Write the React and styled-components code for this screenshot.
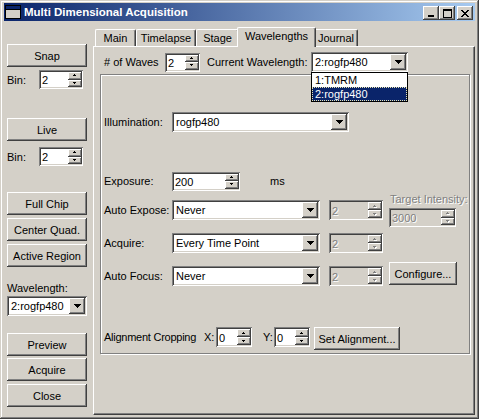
import React from 'react';
import styled, { createGlobalStyle, css } from 'styled-components';

const FONT = `"Liberation Sans", Arial, sans-serif`;

const Global = createGlobalStyle`
  html, body { margin: 0; padding: 0; background: #D4D0C8; }
  body { font-family: ${FONT}; font-size: 11px; color: #000; }
  * { box-sizing: border-box; }
`;

const raised = css`
  background: #D4D0C8;
  box-shadow: inset -1px -1px #404040, inset 1px 1px #fff, inset -2px -2px #808080, inset 2px 2px #D4D0C8;
`;
const sunken = css`
  box-shadow: inset 1px 1px #808080, inset -1px -1px #fff, inset 2px 2px #404040, inset -2px -2px #D4D0C8;
`;
const disabledText = css`
  color: #808080;
  text-shadow: 1px 1px 0 #fff;
`;

const Window = styled.div`
  width: 479px;
  height: 419px;
  background: #D4D0C8;
  padding: 3px 4px 4px 4px;
  box-shadow: inset -1px -1px #404040, inset 1px 1px #D4D0C8, inset -2px -2px #808080, inset 2px 2px #fff;
  display: flex;
  flex-direction: column;
  overflow: hidden;
`;

const TitleBar = styled.div`
  height: 18px;
  flex: none;
  display: flex;
  align-items: center;
  padding: 0 2px 0 1px;
  background: linear-gradient(to right, #0A246A, #A6CAF0);
`;
const TitleText = styled.div`
  flex: 1;
  margin-left: 3px;
  color: #fff;
  font-weight: bold;
  font-size: 11.5px;
  white-space: nowrap;
`;
const CaptionButtons = styled.div`
  display: flex;
  align-self: flex-end;
  margin-bottom: 1px;
`;
const CaptionButton = styled.span`
  ${raised}
  width: 16px;
  height: 14px;
  display: flex;
  align-items: center;
  justify-content: center;
  margin-left: ${p => p.$gap || 0}px;
`;

const Body = styled.div`
  flex: 1;
  display: flex;
  min-height: 0;
`;

const LeftColumn = styled.div`
  width: 80px;
  margin-left: 3px;
  padding-top: 23px;
  display: flex;
  flex-direction: column;
`;

const Button = styled.button`
  ${raised}
  border: 0;
  padding: 0;
  font-family: ${FONT};
  font-size: 11px;
  color: #000;
  width: ${p => p.$w || 80}px;
  height: ${p => p.$h || 23}px;
  margin: ${p => p.$mt || 0}px 0 0 ${p => p.$ml || 0}px;
  display: flex;
  align-items: center;
  justify-content: center;
  flex: none;
  align-self: ${p => (p.$top ? 'flex-start' : 'auto')};
  cursor: default;
`;

const FieldRow = styled.div`
  display: flex;
  align-items: center;
  height: ${p => p.$h || 19}px;
  margin-top: ${p => p.$mt || 0}px;
  flex: none;
`;

const Label = styled.span`
  width: ${p => (p.$w ? `${p.$w}px` : 'auto')};
  margin-left: ${p => p.$ml || 0}px;
  white-space: nowrap;
  flex: none;
  letter-spacing: ${p => (p.$tight ? '-0.25px' : 'normal')};
  ${p => p.$disabled && disabledText}
`;

const SpinBox = styled.div`
  width: ${p => p.$w}px;
  height: ${p => p.$h || 19}px;
  margin-left: ${p => p.$ml || 0}px;
  background: ${p => (p.$disabled ? '#D4D0C8' : '#fff')};
  ${sunken}
  display: flex;
  align-items: stretch;
  padding: 2px 1px 1px 2px;
  flex: none;
`;
const SpinValue = styled.span`
  flex: 1;
  display: flex;
  align-items: center;
  padding-left: 1px;
  ${p => p.$disabled && disabledText}
`;
const SpinButtons = styled.div`
  width: 14px;
  display: flex;
  flex-direction: column;
  margin-bottom: 1px;
`;
const SpinButton = styled.span`
  ${raised}
  flex: 1;
  display: flex;
  align-items: center;
  justify-content: center;
`;

const Combo = styled.div`
  position: relative;
  width: ${p => p.$w}px;
  height: 20px;
  margin-left: ${p => p.$ml || 0}px;
  background: #fff;
  ${sunken}
  display: flex;
  align-items: center;
  padding: 2px 2px 2px 3px;
  flex: none;
`;
const ComboValue = styled.span`
  flex: 1;
  white-space: nowrap;
  overflow: hidden;
  padding-left: 1px;
`;
const ComboArrow = styled.span`
  ${raised}
  width: 16px;
  height: 16px;
  display: flex;
  align-items: center;
  justify-content: center;
  flex: none;
`;
const DropList = styled.div`
  position: absolute;
  left: 0;
  top: 100%;
  width: 100%;
  background: #fff;
  border: 1px solid #000;
  padding: 0;
  z-index: 10;
`;
const DropItem = styled.div`
  height: 14px;
  line-height: 12px;
  padding-left: 2px;
  white-space: nowrap;
  color: ${p => (p.$selected ? '#fff' : '#000')};
  background: ${p => (p.$selected ? '#0A246A' : '#fff')};
  border: 1px dotted ${p => (p.$selected ? '#E8E4B0' : 'transparent')};
`;

const TabControl = styled.div`
  width: 382px;
  margin-left: 6px;
  padding-top: 6px;
  display: flex;
  flex-direction: column;
`;
const TabStrip = styled.div`
  height: 19px;
  display: flex;
  align-items: flex-end;
  padding-left: 2px;
  flex: none;
`;
const Tab = styled.div`
  position: relative;
  width: ${p => (p.$active ? p.$w + 4 : p.$w)}px;
  height: ${p => (p.$active ? 20 : 17)}px;
  margin: 0 ${p => (p.$active ? -2 : 0)}px ${p => (p.$active ? -1 : 0)}px;
  z-index: ${p => (p.$active ? 3 : 1)};
  background: #D4D0C8;
  border-top: 1px solid #fff;
  border-left: 1px solid #fff;
  border-right: 1px solid #404040;
  box-shadow: inset -1px 0 #808080;
  border-top-left-radius: 2px;
  border-top-right-radius: 2px;
  display: flex;
  align-items: center;
  justify-content: center;
  padding-bottom: ${p => (p.$active ? 3 : 1)}px;
  flex: none;
  white-space: nowrap;
`;
const TabPanel = styled.div`
  position: relative;
  z-index: 2;
  flex: 1;
  border-top: 1px solid #fff;
  border-left: 1px solid #fff;
  border-right: 1px solid #404040;
  border-bottom: 1px solid #404040;
  box-shadow: inset -1px -1px #808080;
  padding: 5px 0 0 6px;
  display: flex;
  flex-direction: column;
`;

const GroupBox = styled.div`
  width: 370px;
  height: 280px;
  margin-top: 2px;
  border: 1px solid #808080;
  box-shadow: inset 1px 1px #fff, 1px 1px 0 #fff;
  padding-left: 3px;
  display: flex;
  flex-direction: column;
  flex: none;
`;
const GroupRow = styled.div`
  display: flex;
  align-items: center;
  height: 20px;
  margin-top: ${p => p.$mt || 0}px;
  flex: none;
`;
const TargetCell = styled.div`
  align-self: flex-start;
  margin: -7px 0 0 6px;
  display: flex;
  flex-direction: column;
  flex: none;
`;
const TargetLabel = styled.span`
  height: 13px;
  line-height: 13px;
  margin: 0 0 2px 1px;
  white-space: nowrap;
  ${disabledText}
`;

const DownArrow = () => (
  <svg width="7" height="4" viewBox="0 0 7 4" shapeRendering="crispEdges">
    <path d="M0 0h7v1H0zM1 1h5v1H1zM2 2h3v1H2zM3 3h1v1H3z" fill="#000" />
  </svg>
);

const SmallTri = ({ up, disabled }) => {
  const d = up ? 'M2 0h1v1H2zM1 1h3v1H1z' : 'M1 0h3v1H1zM2 1h1v1H2z';
  return (
    <svg width="6" height="3" viewBox="0 0 6 3" shapeRendering="crispEdges">
      {disabled && <path d={d} fill="#fff" transform="translate(1,1)" />}
      <path d={d} fill={disabled ? '#808080' : '#000'} />
    </svg>
  );
};

const Spinner = ({ value, w, h, ml, disabled }) => (
  <SpinBox $w={w} $h={h} $ml={ml} $disabled={disabled}>
    <SpinValue $disabled={disabled}>{value}</SpinValue>
    <SpinButtons>
      <SpinButton><SmallTri up disabled={disabled} /></SpinButton>
      <SpinButton><SmallTri disabled={disabled} /></SpinButton>
    </SpinButtons>
  </SpinBox>
);

const ComboBox = ({ value, w, ml, children }) => (
  <Combo $w={w} $ml={ml}>
    <ComboValue>{value}</ComboValue>
    <ComboArrow><DownArrow /></ComboArrow>
    {children}
  </Combo>
);

const WindowIcon = () => (
  <svg width="16" height="14" viewBox="0 0 16 14" shapeRendering="crispEdges">
    <rect x="0.5" y="0.5" width="15" height="13" fill="#fff" stroke="#000" />
    <rect x="1" y="1" width="14" height="3" fill="#0A246A" />
    <rect x="1" y="4" width="14" height="1" fill="#000" />
    <rect x="1" y="5" width="14" height="8" fill="#D4D0C8" />
  </svg>
);

const MinGlyph = () => (
  <svg width="8" height="7" viewBox="0 0 8 7" shapeRendering="crispEdges">
    <rect x="1" y="5" width="6" height="2" fill="#000" />
  </svg>
);
const MaxGlyph = () => (
  <svg width="9" height="9" viewBox="0 0 9 9" shapeRendering="crispEdges">
    <path d="M0 0h9v2H0zM0 2h1v7H0zM8 2h1v7H8zM0 8h9v1H0z" fill="#000" />
  </svg>
);
const CloseGlyph = () => (
  <svg width="8" height="7" viewBox="0 0 8 7" shapeRendering="crispEdges">
    <path
      d="M0 0h2v1H0zM6 0h2v1H6zM1 1h2v1H1zM5 1h2v1H5zM2 2h4v1H2zM3 3h2v1H3zM2 4h4v1H2zM1 5h2v1H1zM5 5h2v1H5zM0 6h2v1H0zM6 6h2v1H6z"
      fill="#000"
    />
  </svg>
);

const tabs = [
  { name: 'Main', w: 41 },
  { name: 'Timelapse', w: 60 },
  { name: 'Stage', w: 43 },
  { name: 'Wavelengths', w: 75, active: true },
  { name: 'Journal', w: 44 },
];

export default function App() {
  return (
    <>
      <Global />
      <Window>
        <TitleBar>
          <WindowIcon />
          <TitleText>Multi Dimensional Acquisition</TitleText>
          <CaptionButtons>
            <CaptionButton><MinGlyph /></CaptionButton>
            <CaptionButton><MaxGlyph /></CaptionButton>
            <CaptionButton $gap={2}><CloseGlyph /></CaptionButton>
          </CaptionButtons>
        </TitleBar>
        <Body>
          <LeftColumn>
            <Button>Snap</Button>
            <FieldRow $mt={3}>
              <Label $w={32}>Bin:</Label>
              <Spinner value="2" w={44} />
            </FieldRow>
            <Button $mt={29}>Live</Button>
            <FieldRow $mt={6}>
              <Label $w={32}>Bin:</Label>
              <Spinner value="2" w={44} />
            </FieldRow>
            <Button $mt={26}>Full Chip</Button>
            <Button $mt={3}>Center Quad.</Button>
            <Button $mt={3}>Active Region</Button>
            <FieldRow $h={13} $mt={14}>
              <Label>Wavelength:</Label>
            </FieldRow>
            <FieldRow $h={20} $mt={2}>
              <ComboBox value="2:rogfp480" w={80} />
            </FieldRow>
            <Button $mt={17}>Preview</Button>
            <Button $mt={2}>Acquire</Button>
            <Button $mt={3}>Close</Button>
          </LeftColumn>
          <TabControl>
            <TabStrip>
              {tabs.map(t => (
                <Tab key={t.name} $w={t.w} $active={t.active}>{t.name}</Tab>
              ))}
            </TabStrip>
            <TabPanel>
              <FieldRow $h={20}>
                <Label $w={61} $ml={4}># of Waves</Label>
                <Spinner value="2" w={35} />
                <Label $w={104} $ml={7}>Current Wavelength:</Label>
                <ComboBox value="2:rogfp480" w={97}>
                  <DropList>
                    <DropItem>1:TMRM</DropItem>
                    <DropItem $selected>2:rogfp480</DropItem>
                  </DropList>
                </ComboBox>
              </FieldRow>
              <GroupBox>
                <GroupRow $mt={37}>
                  <Label $w={68}>Illumination:</Label>
                  <ComboBox value="rogfp480" w={177} />
                </GroupRow>
                <GroupRow $mt={39}>
                  <Label $w={68}>Exposure:</Label>
                  <Spinner value="200" w={68} />
                  <Label $ml={30}>ms</Label>
                </GroupRow>
                <GroupRow $mt={9}>
                  <Label $w={68}>Auto Expose:</Label>
                  <ComboBox value="Never" w={148} />
                  <Spinner value="2" w={54} h={20} ml={9} disabled />
                  <TargetCell>
                    <TargetLabel>Target Intensity:</TargetLabel>
                    <Spinner value="3000" w={67} disabled />
                  </TargetCell>
                </GroupRow>
                <GroupRow $mt={13}>
                  <Label $w={68}>Acquire:</Label>
                  <ComboBox value="Every Time Point" w={148} />
                  <Spinner value="2" w={54} h={20} ml={9} disabled />
                </GroupRow>
                <GroupRow $mt={13}>
                  <Label $w={68}>Auto Focus:</Label>
                  <ComboBox value="Never" w={148} />
                  <Spinner value="2" w={54} h={20} ml={9} disabled />
                  <Button $w={68} $ml={6} $mt={-4} $top>Configure...</Button>
                </GroupRow>
                <GroupRow $mt={41}>
                  <Label $w={100} $tight>Alignment Cropping</Label>
                  <Label $w={12}>X:</Label>
                  <Spinner value="0" w={36} h={20} />
                  <Label $w={11} $ml={11}>Y:</Label>
                  <Spinner value="0" w={36} h={20} />
                  <Button $w={86} $ml={4} $top>Set Alignment...</Button>
                </GroupRow>
              </GroupBox>
            </TabPanel>
          </TabControl>
        </Body>
      </Window>
    </>
  );
}
